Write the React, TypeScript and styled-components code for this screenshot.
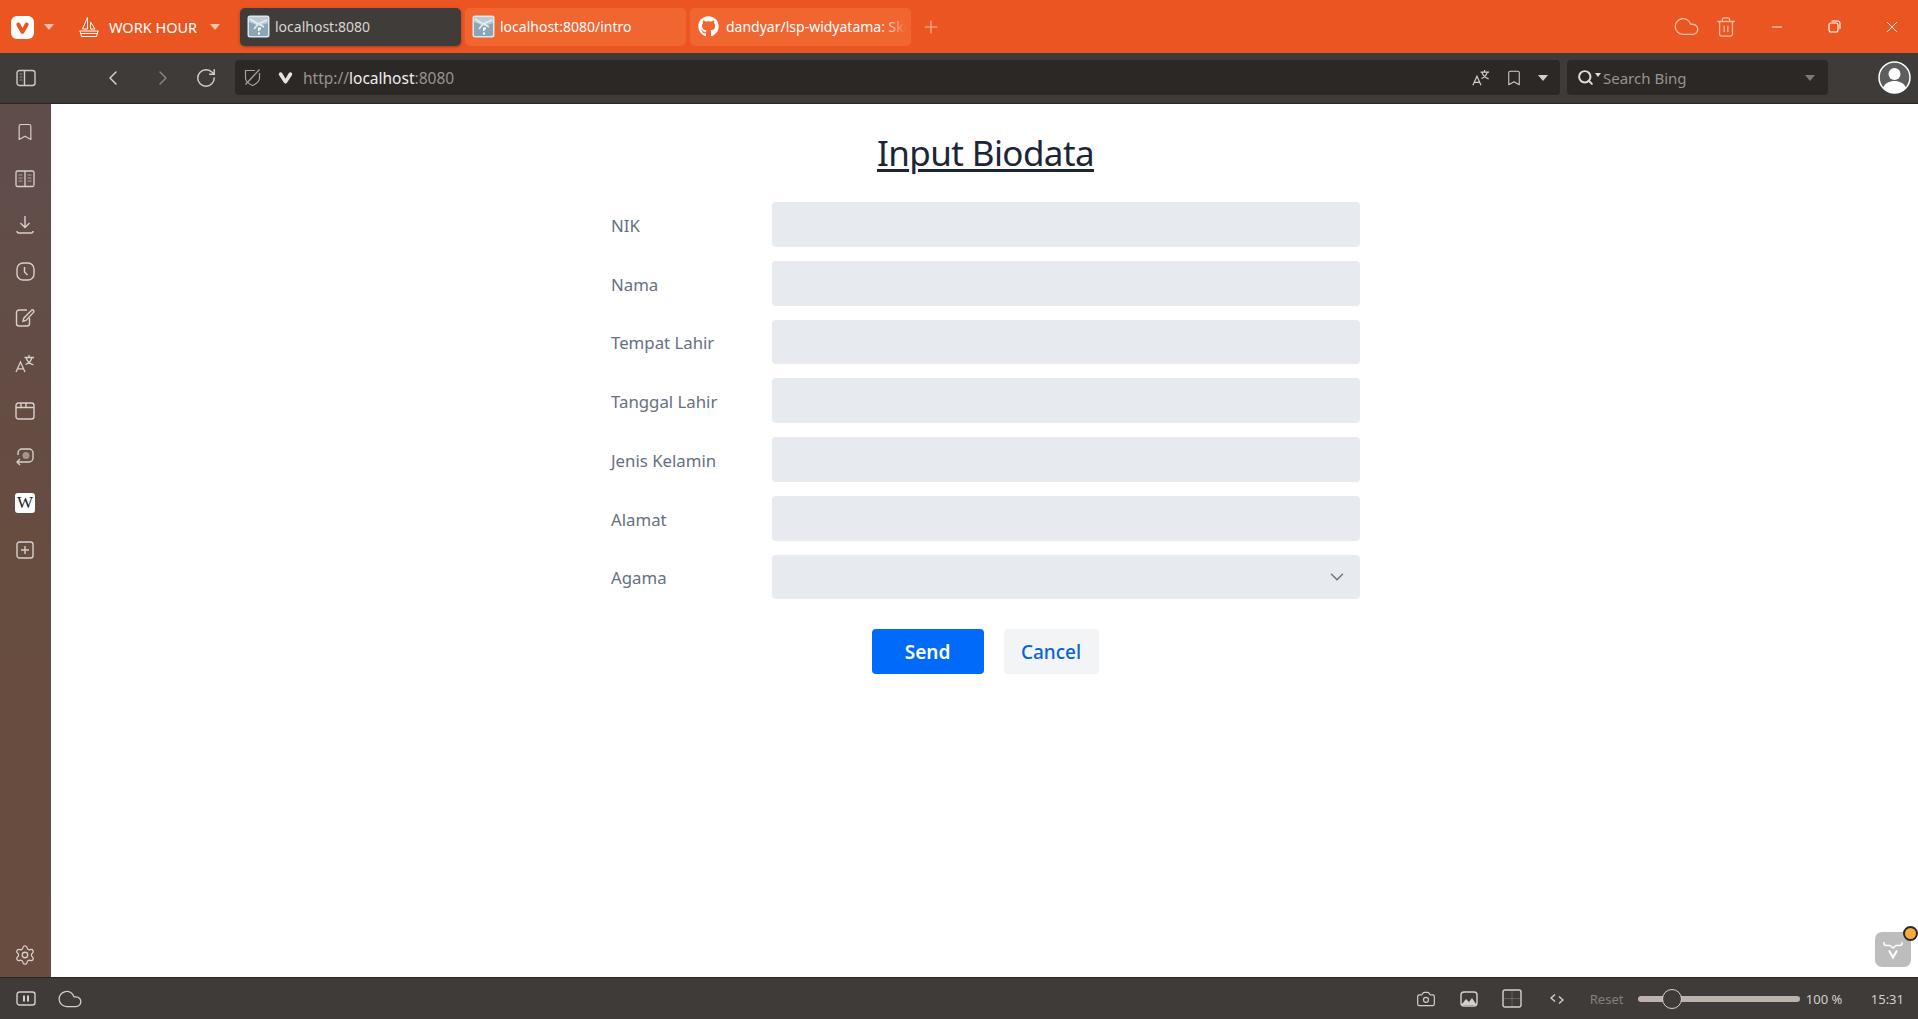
import React from "react";
import styled, { createGlobalStyle } from "styled-components";
import {
  Bookmark, Settings, Cloud, Trash2,
  Minus, X, Plus, ChevronLeft, ChevronRight, RotateCw, Search, ChevronDown, Camera,
} from "lucide-react";
import { FaGithub } from "react-icons/fa";

const UI = `"Noto Sans", "Open Sans", "Liberation Sans", sans-serif`;

const Global = createGlobalStyle`
  html, body { margin: 0; padding: 0; height: 100%; background: #fff; overflow: hidden; }
  #root { height: 100%; }
  * { box-sizing: border-box; }
`;

const Shell = styled.div`
  width: 1918px;
  height: 1019px;
  display: grid;
  grid-template-rows: 53px 51px 1fr 42px;
  grid-template-columns: 51px 1fr;
  font-family: ${UI};
  position: relative;
`;

const TitleBar = styled.header`
  grid-column: 1 / -1;
  background: #eb5522;
  display: flex;
  align-items: center;
  padding: 0 16px 0 11px;
  color: #fff;
`;

const LogoTile = styled.div`
  width: 23px;
  height: 23px;
  border-radius: 6px;
  background: #fff;
  display: flex;
  align-items: center;
  justify-content: center;
  margin-top: 1px;
`;

const Caret = styled.span<{ $c?: string; $ml?: number }>`
  display: block;
  width: 0;
  height: 0;
  border-left: 5px solid transparent;
  border-right: 5px solid transparent;
  border-top: 6px solid ${(p) => p.$c ?? "#f9c4b0"};
  margin-left: ${(p) => p.$ml ?? 0}px;
  flex: none;
`;

const SmallCaret = styled.span`
  display: block;
  width: 0;
  height: 0;
  border-left: 3px solid transparent;
  border-right: 3px solid transparent;
  border-top: 4px solid #e0dcd9;
  margin: -5px 0 0 1px;
`;

const SailWrap = styled.span`
  display: flex;
  margin-left: 25px;
`;

const WorkLabel = styled.span`
  font-size: 14.5px;
  margin-left: 10px;
  width: 91px;
  white-space: nowrap;
`;

const Tabs = styled.div`
  display: flex;
  gap: 4px;
  margin-left: 20px;
`;

const Tab = styled.div<{ $active?: boolean }>`
  width: 221px;
  height: 38px;
  border-radius: 5px;
  background: ${(p) => (p.$active ? "#403c39" : "#f16531")};
  box-shadow: ${(p) => (p.$active ? "0 1px 3px rgba(0,0,0,.3)" : "none")};
  color: ${(p) => (p.$active ? "#d8d5d2" : "#fff")};
  display: flex;
  align-items: center;
  gap: 5px;
  padding: 0 0 0 7px;
  font-size: 14px;
  overflow: hidden;
  white-space: nowrap;
  position: relative;
`;

const TabFade = styled.span`
  position: absolute;
  right: 0;
  top: 0;
  bottom: 0;
  width: 30px;
  background: linear-gradient(90deg, rgba(241, 101, 49, 0), #f16531 85%);
`;

const NewTab = styled.span`
  display: flex;
  margin-left: 10px;
  color: #f9bda6;
`;

const Grow = styled.div`
  flex: 1;
`;

const WinIcons = styled.div`
  display: flex;
  align-items: center;
`;

const WinSlot = styled.span<{ $ml: number; $c?: string }>`
  display: flex;
  width: 20px;
  justify-content: center;
  margin-left: ${(p) => p.$ml}px;
  color: ${(p) => p.$c ?? "#fff"};
  svg { flex: none; }
`;

const AddressBar = styled.div`
  grid-column: 1 / -1;
  background: #3f3b38;
  border-bottom: 1px solid #2a2725;
  display: flex;
  align-items: center;
  color: #cfcac6;
  padding: 0 6px 1px 16px;
`;

const NavSlot = styled.span<{ $ml: number; $c?: string }>`
  display: flex;
  margin-left: ${(p) => p.$ml}px;
  color: ${(p) => p.$c ?? "#d4cfcb"};
`;

const UrlField = styled.div`
  width: 1325px;
  height: 35px;
  margin-left: 18px;
  border-radius: 4px;
  background: #2c2826;
  display: flex;
  align-items: center;
  padding: 0 12px 0 9px;
`;

const UrlText = styled.span`
  margin-left: 10px;
  font-size: 15.5px;
  color: #98938f;
`;

const UrlHost = styled.span`
  color: #f1efed;
`;

const SearchField = styled.div`
  width: 261px;
  height: 35px;
  margin-left: 7px;
  border-radius: 4px;
  background: #2c2826;
  display: flex;
  align-items: center;
  padding: 0 13px 0 10px;
  color: #98938f;
  font-size: 15px;
`;

const SearchGlyph = styled.span`
  display: flex;
  align-items: center;
`;

const SearchLabel = styled.span`
  margin-left: 2px;
  flex: 1;
`;

const Avatar = styled.span`
  display: flex;
  margin-left: 50px;
`;

const Sidebar = styled.aside`
  grid-row: 3;
  background: linear-gradient(180deg, #5f4d4c 0%, #674c40 50%, #684c40 100%);
  display: flex;
  flex-direction: column;
  padding: 5px 0 0;
  color: #d8d0cb;
`;

const SideButton = styled.div`
  height: 46.4px;
  display: flex;
  align-items: center;
  justify-content: center;
  flex: none;
  padding-right: 1px;
`;

const SettingsButton = styled(SideButton)`
  height: 44px;
`;

const WikiTile = styled.span`
  width: 20px;
  height: 20px;
  border-radius: 3px;
  background: #fff;
  color: #222;
  font-family: "Liberation Serif", serif;
  font-size: 17px;
  line-height: 20px;
  text-align: center;
  display: block;
`;

const Main = styled.main`
  grid-row: 3;
  background: #fff;
  display: flex;
  flex-direction: column;
  align-items: center;
  padding: 25px 0 0 2px;
`;

const Title = styled.h1`
  margin: 0 0 25px;
  font-size: 35px;
  line-height: 48px;
  font-weight: 400;
  color: #1a2638;
  text-decoration: underline;
  text-decoration-thickness: 2.5px;
  text-underline-offset: 3px;
  letter-spacing: -0.6px;
`;

const Form = styled.form`
  width: 749px;
  display: flex;
  flex-direction: column;
  gap: 14px;
`;

const Row = styled.div`
  display: grid;
  grid-template-columns: 161px 588px;
  align-items: center;
  height: 44.75px;
`;

const Label = styled.label`
  font-size: 16.8px;
  color: #66707f;
  padding-top: 2px;
`;

const Field = styled.div`
  height: 100%;
  border-radius: 4px;
  background: #e7eaef;
  display: flex;
  align-items: center;
  justify-content: flex-end;
  padding-right: 12px;
  color: #6b7280;
`;

const Actions = styled.div`
  display: flex;
  gap: 20px;
  margin-top: 30px;
  margin-left: -1px;
`;

const Btn = styled.button<{ $primary?: boolean; $w: number }>`
  width: ${(p) => p.$w}px;
  height: 45px;
  border: 0;
  border-radius: 4px;
  font-family: ${UI};
  font-size: 19px;
  font-weight: ${(p) => (p.$primary ? 600 : 500)};
  background: ${(p) => (p.$primary ? "#006bfa" : "#f3f4f6")};
  color: ${(p) => (p.$primary ? "#fff" : "#0b62d6")};
`;

const StatusBar = styled.footer`
  grid-column: 1 / -1;
  background: #3f3b38;
  border-top: 1px solid #2a2725;
  display: flex;
  align-items: center;
  padding: 0 14px 0 16px;
  color: #d4cfcb;
  font-size: 13px;
`;

const StatusSlot = styled.span<{ $ml: number }>`
  display: flex;
  margin-left: ${(p) => p.$ml}px;
`;

const ResetLabel = styled.span`
  margin-left: 26px;
  width: 48px;
  color: #85807c;
`;

const Slider = styled.div`
  width: 162px;
  height: 6px;
  border-radius: 3px;
  background: #bdb2ad;
  position: relative;
  flex: none;
`;

const Thumb = styled.span`
  position: absolute;
  left: 24px;
  top: -7px;
  width: 20px;
  height: 20px;
  border-radius: 50%;
  background: #3f3b38;
  border: 1.5px solid #d8d3cf;
`;

const Zoom = styled.span`
  margin-left: 6px;
  width: 65px;
  white-space: nowrap;
`;

const Time = styled.span`
  white-space: nowrap;
`;

const Badge = styled.div`
  position: absolute;
  left: 1875px;
  top: 932px;
  width: 36px;
  height: 35px;
  border-radius: 7px;
  background: #bdbdbd;
  display: flex;
  align-items: center;
  justify-content: center;
`;

const BadgeDot = styled.span`
  position: absolute;
  right: -7px;
  top: -6px;
  width: 15px;
  height: 15px;
  border-radius: 50%;
  background: #f7ad3c;
  border: 2px solid #2c2826;
`;

const Favicon = () => (
  <svg width="23" height="23" viewBox="0 0 23 23" style={{ flex: "none" }}>
    <rect x="0.5" y="0.5" width="22" height="22" rx="2.5" fill="#dfe6ea" />
    <rect x="2" y="2" width="19" height="19" rx="1.5" fill="#8aa6b6" />
    <path d="M2 2h19v6L12 11 2 7z" fill="#bccbd4" />
    <path d="M3 4l8 5 9-4M11 9l-4 5M12 9l5 3" stroke="#e8edf0" strokeWidth="1.5" fill="none" />
    <path d="M11 12.500h3v2h-1.500V16H11zM11 17.500h2v2h-2z" fill="#fff" />
  </svg>
);

const VLogo = () => (
  <svg width="15" height="15" viewBox="0 0 15 15">
    <path d="M1.800 3.200c1-1.200 2.700-.8 3.300.4l2.400 4.400 2.400-4.400c.6-1.200 2.300-1.600 3.300-.4.6.8.6 1.600.1 2.500l-4.200 7.200c-.7 1.200-2.600 1.200-3.300 0L1.700 5.700c-.5-.9-.5-1.700.1-2.500z" fill="#eb5522" />
  </svg>
);

const Sail = () => (
  <svg width="20" height="22" viewBox="0 0 20 22" fill="none" stroke="#fff" strokeWidth="1">
    <path d="M8.500 1.500 3.500 13h5zM11.500 6v7h4.500zM.5 15h19M1 15l1.500 5.500h15L19 15M1.500 17.500h17" />
  </svg>
);

const PanelIcon = () => (
  <svg width="20" height="18" viewBox="0 0 20 18" fill="none" stroke="currentColor" strokeWidth="1.4">
    <rect x="1" y="1.500" width="18" height="15" rx="2.500" />
    <path d="M8.500 1.500v15" />
    <path d="M3.500 5h3M3.500 8h3M3.500 11h3" strokeWidth="1" opacity=".6" />
  </svg>
);

const ShieldOff = () => (
  <svg width="17" height="19" viewBox="0 0 17 19" fill="none" stroke="#a8a3a0" strokeWidth="1.200">
    <path d="M11 2.500H1.500V10c0 3.500 3.500 6 7 7.500 3.500-1.500 7-4 7-7.500V5" />
    <path d="M1.500 16.500 15.500 1.500" />
  </svg>
);

const SmallV = () => (
  <svg width="15" height="13" viewBox="0 0 15 13">
    <path d="M1 2.200C1.800.8 3.600 1 4.300 2.300L7.500 7.800l3.200-5.500C11.400 1 13.200.8 14 2.200c.4.700.3 1.300-.1 2L9 11.800c-.7 1.100-2.300 1.100-3 0L1.100 4.200c-.4-.7-.5-1.300-.1-2z" fill="#e6e3e1" />
  </svg>
);

const AvatarIcon = () => (
  <svg width="33" height="33" viewBox="0 0 33 33">
    <circle cx="16.500" cy="16.500" r="15.500" fill="#5e5e5e" stroke="#fff" strokeWidth="1.500" />
    <circle cx="16.500" cy="13" r="6" fill="#fff" />
    <path d="M5 27c2-5 6-7 11.500-7S26 22 28 27c-3 3-7 5-11.500 5S8 30 5 27z" fill="#fff" />
  </svg>
);

const BookTile = () => (
  <svg width="20" height="18" viewBox="0 0 20 18" fill="none" stroke="currentColor" strokeWidth="1.300">
    <path d="M1 2.500A1.500 1.500 0 0 1 2.500 1H10v15.500H2.500A1.500 1.500 0 0 1 1 15zM19 2.500A1.500 1.500 0 0 0 17.500 1H10v15.500h7.500A1.500 1.500 0 0 0 19 15z" />
    <path d="M3.500 5h4M3.500 8h4M3.500 11h4M12.500 5h4M12.500 8h4M12.500 11h4" strokeWidth=".9" opacity=".7" />
  </svg>
);

const TrayDownload = () => (
  <svg width="18" height="20" viewBox="0 0 18 20" fill="none" stroke="currentColor" strokeWidth="1.400">
    <path d="M9 1v11M4.500 8 9 12.500 13.500 8" />
    <path d="M1 16c0 1.500.8 2 2 2h12c1.200 0 2-.5 2-2" />
  </svg>
);

const ClockTile = () => (
  <svg width="19" height="19" viewBox="0 0 19 19" fill="none" stroke="currentColor" strokeWidth="1.400">
    <rect x="1" y="1" width="17" height="17" rx="6" />
    <path d="M8.500 5v5l3 3" />
  </svg>
);

const NotePen = () => (
  <svg width="20" height="20" viewBox="0 0 20 20" fill="none" stroke="currentColor" strokeWidth="1.400">
    <path d="M12 2H4a2.500 2.500 0 0 0-2.500 2.500v11A2.500 2.500 0 0 0 4 18h8a2.500 2.500 0 0 0 2.500-2.500V10" />
    <path d="M17 1.800a1.600 1.600 0 0 1 1.500 2.600l-7.500 8-3 .8.800-3z" />
  </svg>
);

const Translate = ({ size = 20 }: { size?: number }) => (
  <svg width={size} height={size} viewBox="0 0 20 20" fill="none" stroke="currentColor" strokeWidth="1.300">
    <path d="M1 18 5.500 8 10 18M2.600 14.800h5.800" />
    <path d="M9.500 3.500h9.500M14 1v2.500M11 3.500c.8 3 3.500 6 7.500 7.500M17 3.500c-.8 3-3.500 6-6.500 7" />
  </svg>
);

const CalendarTabs = () => (
  <svg width="20" height="18" viewBox="0 0 20 18" fill="none" stroke="currentColor" strokeWidth="1.400">
    <rect x="1" y="1" width="18" height="16" rx="2.500" />
    <path d="M1 5.500h18M6 1v4.500M11 1v4.500" />
  </svg>
);

const MailLoop = () => (
  <svg width="20" height="20" viewBox="0 0 20 20" fill="none" stroke="currentColor" strokeWidth="1.400">
    <path d="M3 8V6a4 4 0 0 1 4-4h7a4 4 0 0 1 4 4v5a4 4 0 0 1-4 4H2" />
    <path d="M5 12l-3 3 3 3" />
    <circle cx="11" cy="8.500" r="3.500" fill="currentColor" stroke="none" opacity=".55" />
  </svg>
);

const AddTile = () => (
  <svg width="18" height="18" viewBox="0 0 18 18" fill="none" stroke="currentColor" strokeWidth="1.400">
    <rect x="1" y="1" width="16" height="16" rx="2.500" />
    <path d="M9 5v8M5 9h8" />
  </svg>
);

const PauseTile = () => (
  <svg width="20" height="15" viewBox="0 0 20 15" fill="none" stroke="currentColor" strokeWidth="1.400">
    <rect x="1" y="1" width="18" height="13" rx="2.500" />
    <path d="M8 4.500v6M12 4.500v6" strokeWidth="2" />
  </svg>
);

const ImageTile = () => (
  <svg width="18" height="16" viewBox="0 0 18 16">
    <rect x="1" y="1" width="16" height="14" rx="3" fill="none" stroke="currentColor" strokeWidth="1.400" />
    <path d="M2 13l4-5 3 3 3-4 4 6v1H2z" fill="currentColor" />
  </svg>
);

const GridTile = () => (
  <svg width="20" height="19" viewBox="0 0 20 19" fill="none" stroke="currentColor">
    <rect x="1" y="1" width="18" height="17" rx="2" strokeWidth="1.400" />
    <path d="M10 1v17M1 9.500h18" strokeWidth="1" opacity=".25" />
  </svg>
);

const CodeMark = () => (
  <svg width="14" height="12" viewBox="0 0 14 12" fill="none" stroke="currentColor" strokeWidth="1.500">
    <path d="M5 1.500 1 5l4 3.500M9 3.500 13 7 9 10.500" />
  </svg>
);

const BadgeMark = () => (
  <svg width="22" height="22" viewBox="0 0 22 22" fill="none" stroke="#fff">
    <path d="M2 3v1.500c0 1.500 1 2 2.500 2H8l3 2.500 3-2.500h3.500c1.500 0 2.500-.5 2.500-2V3" strokeWidth="1.500" />
    <path d="M7 11.500l4 7 4-7" strokeWidth="2" />
  </svg>
);

const sideIcons: React.ReactNode[] = [
  <Bookmark size={20} strokeWidth={1.4} />,
  <BookTile />,
  <TrayDownload />,
  <ClockTile />,
  <NotePen />,
  <Translate />,
  <CalendarTabs />,
  <MailLoop />,
  <WikiTile>W</WikiTile>,
  <AddTile />,
];

const fields = ["NIK", "Nama", "Tempat Lahir", "Tanggal Lahir", "Jenis Kelamin", "Alamat"];

export default function App() {
  return (
    <Shell>
      <Global />
      <TitleBar>
        <LogoTile><VLogo /></LogoTile>
        <Caret $ml={10} />
        <SailWrap><Sail /></SailWrap>
        <WorkLabel>WORK HOUR</WorkLabel>
        <Caret $ml={10} />
        <Tabs>
          <Tab $active><Favicon />localhost:8080</Tab>
          <Tab><Favicon />localhost:8080/intro</Tab>
          <Tab>
            <FaGithub size={21} style={{ flex: "none", marginLeft: 1, marginRight: 2 }} />
            dandyar/lsp-widyatama: Skeleton
            <TabFade />
          </Tab>
        </Tabs>
        <NewTab><Plus size={20} strokeWidth={1.4} /></NewTab>
        <Grow />
        <WinIcons>
          <WinSlot $ml={0} $c="#f9bda6"><Cloud size={27} strokeWidth={1.2} /></WinSlot>
          <WinSlot $ml={20} $c="#f9bda6"><Trash2 size={22} strokeWidth={1.4} /></WinSlot>
          <WinSlot $ml={31}><Minus size={16} strokeWidth={1.4} /></WinSlot>
          <WinSlot $ml={37}>
            <svg width="13" height="13" viewBox="0 0 13 13" fill="none" stroke="#fff" strokeWidth="1.100">
              <rect x="1" y="3" width="9" height="9" rx="2" />
              <path d="M3.500 1h6A2.500 2.500 0 0 1 12 3.500V9" />
            </svg>
          </WinSlot>
          <WinSlot $ml={38}><X size={18} strokeWidth={1.2} /></WinSlot>
        </WinIcons>
      </TitleBar>

      <AddressBar>
        <PanelIcon />
        <NavSlot $ml={65}><ChevronLeft size={24} strokeWidth={1.5} /></NavSlot>
        <NavSlot $ml={26} $c="#87827f"><ChevronRight size={24} strokeWidth={1.5} /></NavSlot>
        <NavSlot $ml={20}><RotateCw size={22} strokeWidth={1.6} /></NavSlot>
        <UrlField>
          <ShieldOff />
          <NavSlot $ml={17}><SmallV /></NavSlot>
          <UrlText>http://<UrlHost>localhost</UrlHost>:8080</UrlText>
          <Grow />
          <NavSlot $ml={0}><Translate size={18} /></NavSlot>
          <NavSlot $ml={15}><Bookmark size={18} strokeWidth={1.4} /></NavSlot>
          <Caret $c="#d4cfcb" $ml={15} />
        </UrlField>
        <SearchField>
          <SearchGlyph>
            <Search size={17} strokeWidth={2.8} color="#e0dcd9" />
            <SmallCaret />
          </SearchGlyph>
          <SearchLabel>Search Bing</SearchLabel>
          <Caret $c="#7e7975" />
        </SearchField>
        <Avatar><AvatarIcon /></Avatar>
      </AddressBar>

      <Sidebar>
        {sideIcons.map((icon, i) => (
          <SideButton key={i}>{icon}</SideButton>
        ))}
        <Grow />
        <SettingsButton><Settings size={22} strokeWidth={1.4} /></SettingsButton>
      </Sidebar>

      <Main>
        <Title>Input Biodata</Title>
        <Form>
          {fields.map((f) => (
            <Row key={f}>
              <Label>{f}</Label>
              <Field />
            </Row>
          ))}
          <Row>
            <Label>Agama</Label>
            <Field><ChevronDown size={22} strokeWidth={1.6} /></Field>
          </Row>
        </Form>
        <Actions>
          <Btn $primary $w={112} type="button">Send</Btn>
          <Btn $w={95} type="button">Cancel</Btn>
        </Actions>
      </Main>

      <StatusBar>
        <PauseTile />
        <StatusSlot $ml={21}><Cloud size={26} strokeWidth={1.2} /></StatusSlot>
        <Grow />
        <StatusSlot $ml={0}><Camera size={20} strokeWidth={1.4} /></StatusSlot>
        <StatusSlot $ml={24}><ImageTile /></StatusSlot>
        <StatusSlot $ml={24}><GridTile /></StatusSlot>
        <StatusSlot $ml={28}><CodeMark /></StatusSlot>
        <ResetLabel>Reset</ResetLabel>
        <Slider><Thumb /></Slider>
        <Zoom>100 %</Zoom>
        <Time>15:31</Time>
      </StatusBar>

      <Badge>
        <BadgeMark />
        <BadgeDot />
      </Badge>
    </Shell>
  );
}
